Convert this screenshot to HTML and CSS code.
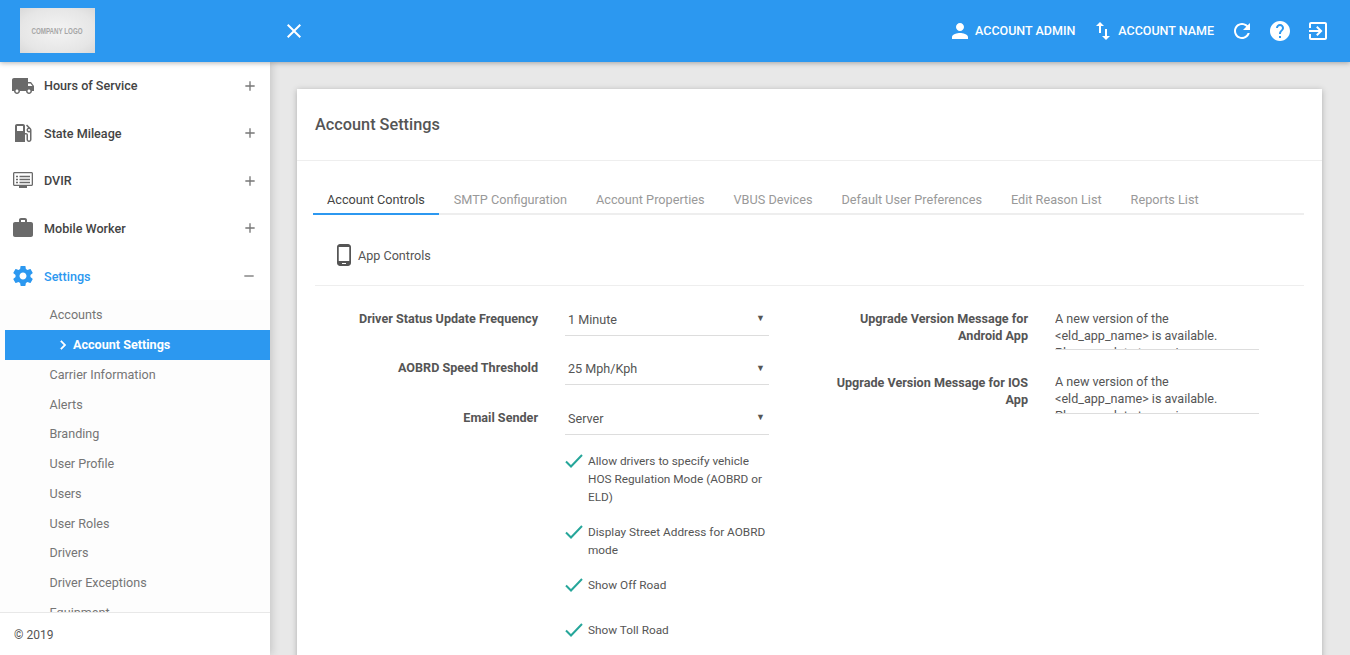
FILE: index.html
```html
<!DOCTYPE html>
<html lang="en">
<head>
<meta charset="utf-8">
<title>Account Settings</title>
<link rel="stylesheet" href="styles.css">
</head>
<body>
<header class="topbar">
  <div class="logo"><span class="logo-text">COMPANY LOGO</span></div>
  <svg class="icon close" viewBox="0 0 24 24"><path d="M19 6.41L17.59 5 12 10.59 6.41 5 5 6.41 10.59 12 5 17.59 6.41 19 12 13.41 17.59 19 19 17.59 13.41 12z"/></svg>
  <div class="top-actions">
    <svg class="icon" viewBox="0 0 24 24"><path d="M12 12c2.21 0 4-1.79 4-4s-1.79-4-4-4-4 1.79-4 4 1.79 4 4 4zm0 2c-2.67 0-8 1.34-8 4v2h16v-2c0-2.66-5.33-4-8-4z"/></svg>
    <span class="top-label">ACCOUNT ADMIN</span>
    <svg class="icon" viewBox="0 0 24 24"><path d="M16 17.01V10h-2v7.01h-3L15 21l4-3.99h-3zM9 3L5 6.99h3V14h2V6.99h3L9 3z"/></svg>
    <span class="top-label">ACCOUNT NAME</span>
    <svg class="icon" viewBox="0 0 24 24"><path d="M17.65 6.35C16.2 4.9 14.21 4 12 4c-4.42 0-7.99 3.58-7.99 8s3.57 8 7.99 8c3.73 0 6.84-2.55 7.73-6h-2.08c-.82 2.33-3.04 4-5.65 4-3.31 0-6-2.69-6-6s2.69-6 6-6c1.66 0 3.14.69 4.22 1.78L13 11h7V4l-2.35 2.35z"/></svg>
    <svg class="icon" viewBox="0 0 24 24"><path d="M12 2C6.48 2 2 6.48 2 12s4.48 10 10 10 10-4.48 10-10S17.52 2 12 2zm1 17h-2v-2h2v2zm2.07-7.75l-.9.92C13.45 12.9 13 13.5 13 15h-2v-.5c0-1.1.45-2.1 1.17-2.83l1.24-1.26c.37-.36.59-.86.59-1.41 0-1.1-.9-2-2-2s-2 .9-2 2H8c0-2.21 1.79-4 4-4s4 1.79 4 4c0 .88-.36 1.68-.93 2.25z"/></svg>
    <svg class="icon" viewBox="0 0 24 24"><path d="M10.09 15.59L11.5 17l5-5-5-5-1.41 1.41L12.67 11H3v2h9.67l-2.58 2.59zM19 3H5c-1.11 0-2 .9-2 2v4h2V5h14v14H5v-4H3v4c0 1.1.89 2 2 2h14c1.1 0 2-.9 2-2V5c0-1.1-.9-2-2-2z"/></svg>
  </div>
</header>
<div class="shell">
  <aside class="sidebar">
    <nav class="nav">
      <div class="nav-item">
        <svg class="nav-icon" viewBox="0 0 24 24"><path d="M20 8h-3V4H3c-1.1 0-2 .9-2 2v11h2c0 1.66 1.34 3 3 3s3-1.34 3-3h6c0 1.66 1.34 3 3 3s3-1.34 3-3h2v-5l-3-4zM6 18.5c-.83 0-1.5-.67-1.5-1.5s.67-1.5 1.5-1.5 1.5.67 1.5 1.5-.67 1.5-1.5 1.5zm13.5-9l1.96 2.5H17V9.5h2.5zm-1.5 9c-.83 0-1.5-.67-1.5-1.5s.67-1.5 1.5-1.5 1.5.67 1.5 1.5-.67 1.5-1.5 1.5z"/></svg>
        <span class="nav-text">Hours of Service</span>
        <svg class="nav-toggle" viewBox="0 0 24 24"><path d="M19 13h-6v6h-2v-6H5v-2h6V5h2v6h6v2z"/></svg>
      </div>
      <div class="nav-item">
        <svg class="nav-icon" viewBox="0 0 24 24"><path d="M19.77 7.23l.01-.01-3.72-3.72L15 4.56l2.11 2.11c-.94.36-1.61 1.26-1.61 2.33 0 1.38 1.12 2.5 2.5 2.5.36 0 .69-.08 1-.21v7.21c0 .55-.45 1-1 1s-1-.45-1-1V14c0-1.1-.9-2-2-2h-1V5c0-1.1-.9-2-2-2H6c-1.1 0-2 .9-2 2v16h10v-7.5h1.5v5c0 1.38 1.12 2.5 2.5 2.5s2.5-1.12 2.5-2.5V9c0-.69-.28-1.32-.73-1.77zM12 10H6V5h6v5zm6 0c-.55 0-1-.45-1-1s.45-1 1-1 1 .45 1 1-.45 1-1 1z"/></svg>
        <span class="nav-text">State Mileage</span>
        <svg class="nav-toggle" viewBox="0 0 24 24"><path d="M19 13h-6v6h-2v-6H5v-2h6V5h2v6h6v2z"/></svg>
      </div>
      <div class="nav-item">
        <svg class="nav-icon" viewBox="0 0 24 24"><path fill-rule="evenodd" d="M3.5 3h17c.8 0 1.5.7 1.5 1.5v11c0 .8-.7 1.5-1.5 1.5H16v2H8v-2H3.5c-.8 0-1.5-.7-1.5-1.5v-11C2 3.7 2.7 3 3.5 3zm0 1.3c-.1 0-.2.1-.2.2v11c0 .1.1.2.2.2h17c.1 0 .2-.1.2-.2v-11c0-.1-.1-.2-.2-.2h-17zM5 6.8h2v1.4H5zm3.5 0H19v1.4H8.5zM5 9.8h2v1.4H5zm3.5 0H19v1.4H8.5zM5 12.8h2v1.4H5zm3.5 0H19v1.4H8.5z"/></svg>
        <span class="nav-text">DVIR</span>
        <svg class="nav-toggle" viewBox="0 0 24 24"><path d="M19 13h-6v6h-2v-6H5v-2h6V5h2v6h6v2z"/></svg>
      </div>
      <div class="nav-item">
        <svg class="nav-icon" viewBox="0 0 24 24"><path d="M20 6h-4V4c0-1.11-.89-2-2-2h-4c-1.11 0-2 .89-2 2v2H4c-1.11 0-1.99.89-1.99 2L2 19c0 1.11.89 2 2 2h16c1.11 0 2-.89 2-2V8c0-1.11-.89-2-2-2zm-6 0h-4V4h4v2z"/></svg>
        <span class="nav-text">Mobile Worker</span>
        <svg class="nav-toggle" viewBox="0 0 24 24"><path d="M19 13h-6v6h-2v-6H5v-2h6V5h2v6h6v2z"/></svg>
      </div>
      <div class="nav-item nav-item-open">
        <svg class="nav-icon" viewBox="0 0 24 24"><path d="M19.43 12.98c.04-.32.07-.64.07-.98s-.03-.66-.07-.98l2.11-1.65c.19-.15.24-.42.12-.64l-2-3.46c-.12-.22-.39-.3-.61-.22l-2.49 1c-.52-.4-1.08-.73-1.69-.98l-.38-2.65C14.46 2.18 14.25 2 14 2h-4c-.25 0-.46.18-.49.42l-.38 2.65c-.61.25-1.17.59-1.69.98l-2.49-1c-.23-.09-.49 0-.61.22l-2 3.46c-.13.22-.07.49.12.64l2.11 1.65c-.04.32-.07.65-.07.98s.03.66.07.98l-2.11 1.65c-.19.15-.24.42-.12.64l2 3.46c.12.22.39.3.61.22l2.49-1c.52.4 1.08.73 1.69.98l.38 2.65c.03.24.24.42.49.42h4c.25 0 .46-.18.49-.42l.38-2.65c.61-.25 1.17-.59 1.69-.98l2.49 1c.23.09.49 0 .61-.22l2-3.46c.12-.22.07-.49-.12-.64l-2.11-1.65zM12 15.5c-1.93 0-3.5-1.57-3.5-3.5s1.57-3.5 3.5-3.5 3.5 1.57 3.5 3.5-1.57 3.5-3.5 3.5z"/></svg>
        <span class="nav-text">Settings</span>
        <svg class="nav-toggle minus" viewBox="0 0 24 24"><path d="M19 13H5v-2h14v2z"/></svg>
      </div>
      <ul class="sub">
        <li class="sub-item">Accounts</li>
        <li class="sub-item sub-active">
          <svg class="chev" viewBox="0 0 24 24"><path d="M10 6L8.59 7.41 13.17 12l-4.58 4.59L10 18l6-6z"/></svg>
          Account Settings
        </li>
        <li class="sub-item">Carrier Information</li>
        <li class="sub-item">Alerts</li>
        <li class="sub-item">Branding</li>
        <li class="sub-item">User Profile</li>
        <li class="sub-item">Users</li>
        <li class="sub-item">User Roles</li>
        <li class="sub-item">Drivers</li>
        <li class="sub-item">Driver Exceptions</li>
        <li class="sub-item">Equipment</li>
      </ul>
    </nav>
    <footer class="side-footer">© 2019</footer>
  </aside>
  <main class="main">
    <section class="card">
      <h1 class="card-title">Account Settings</h1>
      <div class="card-body">
        <div class="tabs">
          <span class="tab tab-active">Account Controls</span>
          <span class="tab">SMTP Configuration</span>
          <span class="tab">Account Properties</span>
          <span class="tab">VBUS Devices</span>
          <span class="tab">Default User Preferences</span>
          <span class="tab">Edit Reason List</span>
          <span class="tab">Reports List</span>
        </div>
        <div class="section-head">
          <svg class="phone" viewBox="0 0 24 24"><path d="M16 1H8C6.34 1 5 2.34 5 4v16c0 1.66 1.34 3 3 3h8c1.66 0 3-1.34 3-3V4c0-1.66-1.34-3-3-3zm-2 20h-4v-1h4v1zm3.25-3H6.75V4h10.5v14z"/></svg>
          <span>App Controls</span>
        </div>
        <div class="form">
          <div class="col-left">
            <div class="row">
              <label class="label">Driver Status Update Frequency</label>
              <div class="select"><span>1 Minute</span><span class="arrow">▼</span></div>
            </div>
            <div class="row">
              <label class="label">AOBRD Speed Threshold</label>
              <div class="select"><span>25 Mph/Kph</span><span class="arrow">▼</span></div>
            </div>
            <div class="row">
              <label class="label">Email Sender</label>
              <div class="select"><span>Server</span><span class="arrow">▼</span></div>
            </div>
            <div class="checks">
              <div class="check">
                <svg class="tick" viewBox="0 0 18 14"><path d="M1 7.5l5 5L17 1"/></svg>
                <span>Allow drivers to specify vehicle HOS Regulation Mode (AOBRD or ELD)</span>
              </div>
              <div class="check">
                <svg class="tick" viewBox="0 0 18 14"><path d="M1 7.5l5 5L17 1"/></svg>
                <span>Display Street Address for AOBRD mode</span>
              </div>
              <div class="check">
                <svg class="tick" viewBox="0 0 18 14"><path d="M1 7.5l5 5L17 1"/></svg>
                <span>Show Off Road</span>
              </div>
              <div class="check">
                <svg class="tick" viewBox="0 0 18 14"><path d="M1 7.5l5 5L17 1"/></svg>
                <span>Show Toll Road</span>
              </div>
            </div>
          </div>
          <div class="col-right">
            <div class="row-text">
              <label class="label label-text">Upgrade Version Message for Android App</label>
              <div class="textbox">A new version of the &lt;eld_app_name&gt; is available. Please update to version</div>
            </div>
            <div class="row-text">
              <label class="label label-text">Upgrade Version Message for IOS App</label>
              <div class="textbox">A new version of the &lt;eld_app_name&gt; is available. Please update to version</div>
            </div>
          </div>
        </div>
      </div>
    </section>
  </main>
</div>
</body>
</html>
```
FILE: styles.css
```css
* { box-sizing: border-box; }
html, body { margin: 0; height: 100%; }
body {
  display: flex;
  flex-direction: column;
  height: 655px;
  overflow: hidden;
  font-family: Roboto, "Liberation Sans", sans-serif;
  font-size: 12.6px;
  color: #555;
  background: #e8e8e8;
}
svg { display: block; flex: none; fill: currentColor; }

.topbar {
  position: relative;
  z-index: 3;
  flex: none;
  display: flex;
  align-items: center;
  height: 62px;
  padding: 0 20px;
  background: #2c98f0;
  color: #fff;
  box-shadow: 0 1px 5px rgba(0, 0, 0, .3);
}
.logo {
  display: flex;
  align-items: center;
  justify-content: center;
  width: 75px;
  height: 45px;
  margin-top: -1px;
  background: radial-gradient(ellipse at center, #f4f4f4 0%, #e6e6e6 70%, #d9d9d9 100%);
}
.logo-text {
  flex: none;
  font-family: "Liberation Sans", sans-serif;
  font-size: 8.5px;
  font-weight: 700;
  color: #a6a6a6;
  transform: scaleX(.73);
}
.icon { width: 24px; height: 24px; }
.close { margin-left: 187px; margin-top: -1px; }
.top-actions {
  display: flex;
  align-items: center;
  margin-left: auto;
  margin-top: -1px;
}
.top-actions .icon + .icon { margin-left: 14px; }
.top-label { font-size: 12.5px; font-weight: 500; margin-left: 3px; margin-right: 16px; }

.shell { flex: 1; min-height: 0; display: flex; }

.sidebar {
  position: relative;
  z-index: 2;
  flex: none;
  width: 270px;
  display: flex;
  flex-direction: column;
  background: #fff;
  box-shadow: 2px 0 8px rgba(0, 0, 0, .15);
}
.nav { flex: 1; min-height: 0; overflow: hidden; background: #fdfdfd; }
.nav-item {
  display: flex;
  align-items: center;
  height: 47.5px;
  padding: 0 12px 0 11px;
  font-weight: 500;
  color: #444;
  background: #fff;
}
.nav-icon { width: 24px; height: 24px; color: #6a6a6a; }
.nav-text { margin-left: 9px; }
.nav-toggle { width: 16px; height: 16px; margin-left: auto; color: #777; }
.nav-toggle.minus { margin-right: 1px; }
.nav-item-open, .nav-item-open .nav-icon { color: #2c98f0; }
.nav-item-open { height: 48px; }

.sub { list-style: none; margin: 0; padding: 0; }
.sub-item {
  display: flex;
  align-items: center;
  height: 29.75px;
  margin-left: 5px;
  padding-left: 44.5px;
  color: #757575;
}
.sub-active {
  padding-left: 49px;
  font-weight: 700;
  color: #fff;
  background: #2c98f0;
}
.chev { width: 18px; height: 18px; margin-right: 1px; stroke: currentColor; stroke-width: .6; }
.side-footer {
  flex: none;
  height: 43px;
  padding: 1px 0 0 14px;
  display: flex;
  align-items: center;
  font-size: 12px;
  color: #555;
  background: #fff;
  border-top: 1px solid #e8e8e8;
}

.main { flex: 1; min-width: 0; padding: 27px 28px 0 27px; overflow: hidden; }
.card {
  height: 100%;
  min-height: 600px;
  background: #fff;
  box-shadow: 0 1px 6px rgba(0, 0, 0, .25);
}
.card-title {
  display: flex;
  align-items: center;
  height: 72px;
  margin: 0;
  padding: 0 18px 1px;
  font-size: 16.3px;
  font-weight: 500;
  color: #555;
  border-bottom: 1px solid #eee;
}
.card-body { padding: 24px 18px 0; }

.tabs {
  display: flex;
  gap: 1px;
  height: 30px;
  margin-left: -2px;
  border-bottom: 2px solid #eee;
}
.tab {
  height: 30px;
  padding: 0 14px;
  font-size: 12.7px;
  line-height: 29px;
  color: #999;
}
.tab-active { color: #444; border-bottom: 2px solid #2c98f0; }

.section-head {
  display: flex;
  align-items: center;
  height: 71px;
  padding: 10px 0 0 17px;
  border-bottom: 1px solid #eee;
}
.phone { width: 24px; height: 24px; color: #555; margin-right: 2px; }

.form { display: flex; padding-top: 16.6px; }
.col-left { flex: none; width: 513px; }
.col-right { flex: none; width: 476px; }

.row { display: flex; height: 49.5px; }
.label {
  flex: none;
  width: 223px;
  margin-right: 27px;
  text-align: right;
  font-weight: 700;
  color: #555;
}
.row .label { line-height: 31.6px; }
.select {
  flex: none;
  display: flex;
  justify-content: space-between;
  align-items: center;
  width: 204px;
  height: 33px;
  padding: 1px 4px 0 3px;
  border-bottom: 1px solid #ddd;
}
.arrow { font-size: 9px; line-height: 1; margin-top: -1px; color: #555; }

.checks { width: 204px; margin-left: 250px; padding-top: 1px; }
.check {
  display: flex;
  min-height: 28px;
  margin-bottom: 17px;
  font-size: 11.8px;
  line-height: 18px;
}
.tick { width: 18px; height: 14px; margin: 2px 5px 0 0; fill: none; stroke: #26a69a; stroke-width: 2; }

.row-text { display: flex; height: 64px; }
.row-text .label { width: 200px; line-height: 17px; padding-top: 7px; }
.textbox {
  flex: none;
  width: 204px;
  height: 48px;
  padding: 8px 24px 0 0;
  margin-top: -1px;
  line-height: 17px;
  overflow: hidden;
  border-bottom: 1px solid #ddd;
}
.row-text + .row-text .textbox { padding-top: 7px; }
```
